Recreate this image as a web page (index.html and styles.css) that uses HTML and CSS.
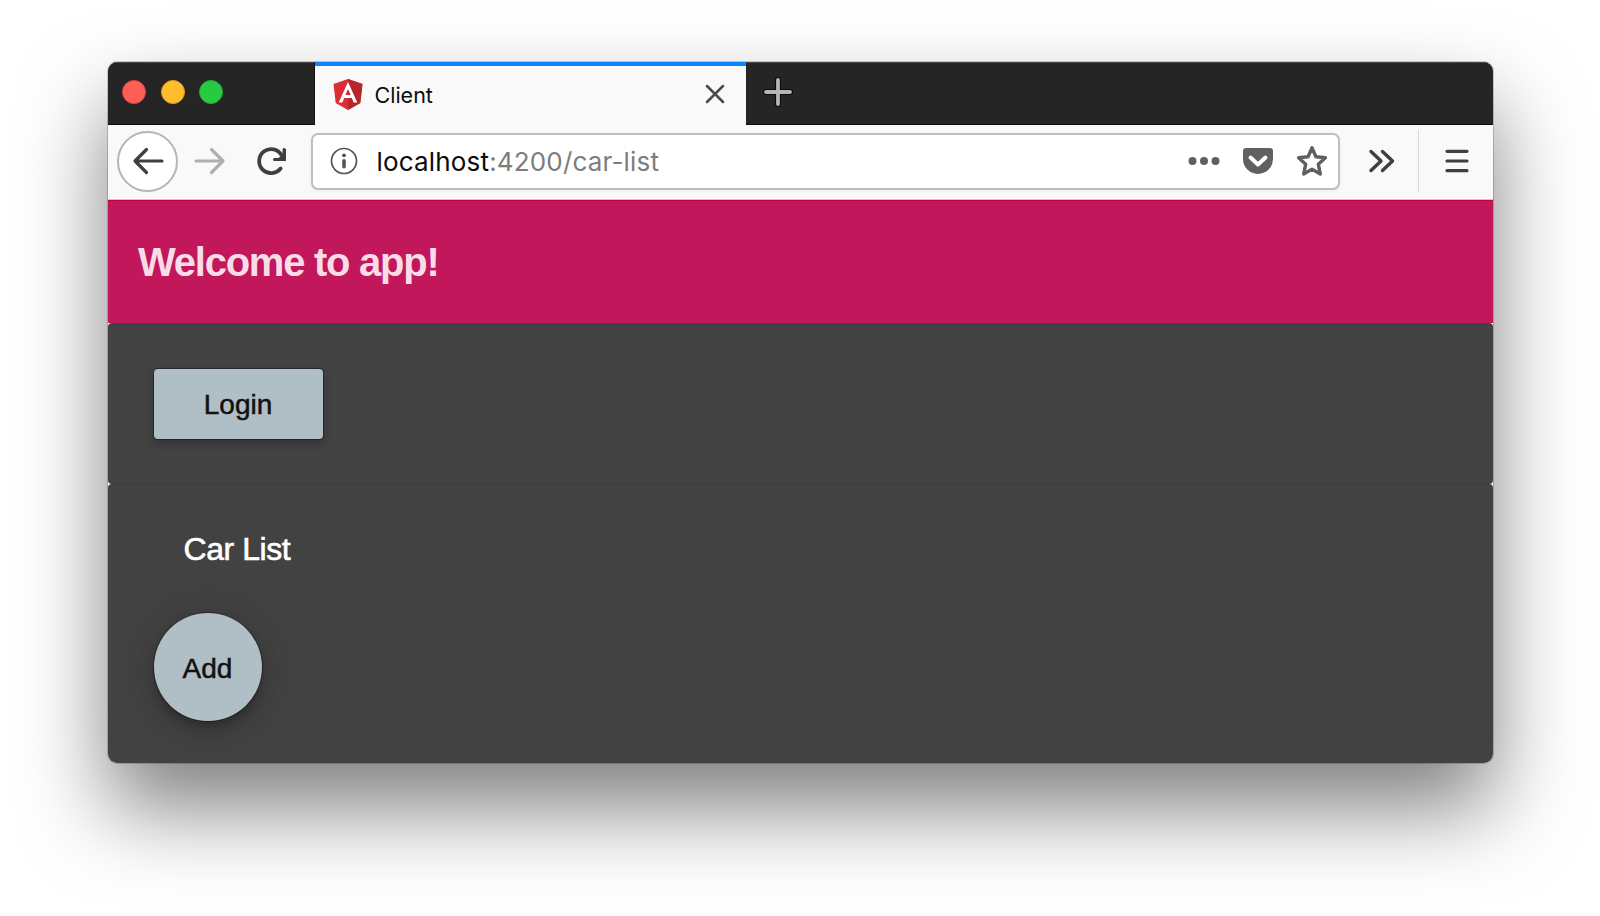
FILE: index.html
```
<!DOCTYPE html>
<html lang="en">
<head>
<meta charset="utf-8">
<title>Client</title>
<link rel="stylesheet" href="styles.css">
</head>
<body>
<div class="window">
  <header class="tabbar">
    <div class="lights"><i class="light red"></i><i class="light yellow"></i><i class="light green"></i></div>
    <div class="tab">
      <svg class="favicon" width="30" height="31" viewBox="0 0 30 31"><path fill="#dd2c35" d="M15 0 29.5 5 27.3 24 15 31 2.7 24 .5 5Z"/><path fill="#b3272d" d="M15 0 29.5 5 27.3 24 15 31Z"/><path fill="#fff" fill-rule="evenodd" d="M15 3 24.3 23.5H20.6L18.8 19H11.2L9.4 23.5H5.7ZM15 10 12.4 16H17.6Z"/></svg>
      <span class="tab-title">Client</span>
      <svg class="close" width="20" height="20" viewBox="0 0 20 20"><path d="M2 2 18 18M18 2 2 18"/></svg>
    </div>
    <svg class="plus" width="30" height="30" viewBox="0 0 30 30"><path class="plus-edge" d="M15 3V27M3 15H27"/><path class="plus-line" d="M15 3V27M3 15H27"/></svg>
  </header>
  <nav class="toolbar">
    <span class="back"><svg width="34" height="30" viewBox="0 0 34 30"><path class="line" d="M31 15H4M15.5 3.5 4 15 15.5 26.500"/></svg></span>
    <svg class="forward" width="34" height="30" viewBox="0 0 34 30"><path class="line pale" d="M3 15H30M18.500 3.500 30 15 18.500 26.500"/></svg>
    <svg class="reload" width="32" height="30" viewBox="0 0 32 30"><path class="line thick" d="M24.600 22.500A12 12 0 1 1 25.500 9"/><path fill="#3f3f41" d="M26.500 3.500Q26.500 2 28 2Q30 2 30 3.500V15H18.500Q17 15 17 13.500T18.500 12H22.500L26.500 8Z"/></svg>
    <div class="urlbar">
      <svg class="info" width="28" height="28" viewBox="0 0 28 28"><circle cx="14" cy="14" r="12.500" fill="none" stroke="#555" stroke-width="1.700"/><circle cx="14" cy="8.300" r="1.900" fill="#555"/><path d="M14 13.700V19.700" stroke="#555" stroke-width="3.600" stroke-linecap="round"/></svg>
      <span class="url"><b class="host">localhost</b>:4200/car-list</span>
      <svg class="dots" width="32" height="10" viewBox="0 0 32 10"><g fill="#606062"><circle cx="4.500" cy="5" r="4"/><circle cx="16" cy="5" r="4"/><circle cx="27.500" cy="5" r="4"/></g></svg>
      <svg class="pocket" width="32" height="28" viewBox="0 0 32 28"><path fill="#606062" d="M4 1H28Q31 1 31 4V12A15 15 0 0 1 1 12V4Q1 1 4 1Z"/><path d="M8.500 10.500 16 17.500 23.500 10.500" fill="none" stroke="#fff" stroke-width="4" stroke-linecap="round" stroke-linejoin="round"/></svg>
      <svg class="star" width="32" height="32" viewBox="0 0 32 32"><path d="M16 2.800 19.900 11.700 29.400 12.700 22.300 19.200 24.300 29 16 24.100 7.700 29 9.700 19.200 2.600 12.700 12.100 11.700Z" fill="#fff" stroke="#606062" stroke-width="3.400" stroke-linejoin="round"/></svg>
    </div>
    <svg class="more" width="28" height="26" viewBox="0 0 28 26"><path class="line chevrons" d="M3 3.500 13 13 3 22.500M14.500 3.500 24.500 13 14.500 22.500"/></svg>
    <span class="divider"></span>
    <svg class="menu" width="24" height="26" viewBox="0 0 24 26"><path class="line" d="M2 3.300H22M2 13H22M2 22.700H22"/></svg>
  </nav>
  <main class="page">
    <div class="banner"><h1 class="welcome">Welcome to app!</h1></div>
    <section class="card login-card"><button class="btn login">Login</button></section>
    <section class="card list-card">
      <h2 class="list-title">Car List</h2>
      <button class="btn add">Add</button>
    </section>
  </main>
</div>
</body>
</html>
```
FILE: styles.css
```
* { box-sizing: border-box; }
body {
  margin: 0;
  height: 916px;
  padding: 61.500px 0 0 107.500px;
  overflow: hidden;
  background: #fff;
  font-family: "Liberation Sans", Arial, sans-serif;
}
svg { display: block; flex: none; }
.window {
  width: 1385px;
  height: 701px;
  border-radius: 9px;
  overflow: hidden;
  background: #fff;
  box-shadow: 0 0 0 1px rgba(0,0,0,.18), 0 45px 86px rgba(0,0,0,.5);
}
.tabbar {
  display: flex;
  height: 63px;
  background: #252525;
  box-shadow: inset 0 1px #484848, inset 0 -1px #0c0c0c;
}
.lights { display: flex; gap: 14.500px; width: 207px; padding: 18.500px 0 0 14.500px; border-right: 1px solid #111; }
.light { width: 24px; height: 24px; border-radius: 50%; }
.red { background: #ff5f57; border: 1px solid #e0463f; }
.yellow { background: #ffbd2e; border: 1px solid #df9f20; }
.green { background: #28ca42; border: 1px solid #1eab30; }
.tab {
  display: flex;
  width: 431px;
  padding-left: 18px;
  background: #f9f9fa;
  border-top: 4px solid #0a84ff;
}
.favicon { margin-top: 13px; }
.tab-title {
  flex: 1;
  padding: 15.500px 0 0 12px;
  font: 21.500px/28px Inter, sans-serif;
  color: #0c0c0d;
}
.close { margin: 18.500px 21px 0 0; fill: none; stroke: #4a4a4b; stroke-width: 2.500; stroke-linecap: round; }
.plus { margin: 15.500px 0 0 17px; fill: none; stroke-linecap: round; }
.plus-edge { stroke: #0a0a0a; stroke-width: 6; }
.plus-line { stroke: #b5b5b5; stroke-width: 3.800; }
.toolbar {
  display: flex;
  align-items: center;
  height: 75px;
  padding: 0 24px 1px 9.500px;
  background: #f9f9fa;
  border-bottom: 1px solid #c8c8c8;
}
.back {
  display: grid;
  place-items: center;
  width: 61px;
  height: 61px;
  border: 2px solid #b5b5b5;
  border-radius: 50%;
  background: #fff;
}
.forward { margin-left: 14.500px; }
.reload { margin-left: 29.500px; }
.line { fill: none; stroke: #3f3f41; stroke-width: 3.200; stroke-linecap: round; stroke-linejoin: round; }
.pale { stroke: #b0b0b1; }
.thick { stroke-width: 3.800; }
.chevrons { stroke-width: 3.400; }
.urlbar {
  display: flex;
  align-items: center;
  width: 1029px;
  height: 57px;
  margin-left: 23px;
  padding: 0 10px 0 17px;
  border: 2px solid #bebebe;
  border-radius: 7px;
  background: #fff;
  box-shadow: 0 1px 4px rgba(0,0,0,.05);
}
.url { flex: 1; margin: 2px 0 0 18.500px; font: 26px/32px Inter, sans-serif; letter-spacing: .17px; color: #7d7d7d; }
.host { font-weight: 400; color: #0c0c0d; }
.pocket { margin-left: 22px; }
.star { margin-left: 22px; }
.more { margin-left: 28px; }
.divider { width: 1px; height: 62px; margin-left: 22px; background: #d7d7d8; }
.menu { margin-left: auto; }
.page { background: #fff; }
.banner { height: 123px; padding: 38.500px 30.500px; background: #c2185b; box-shadow: inset 0 1px #c0004b; }
.welcome { margin: 0; font-size: 40px; line-height: 48px; letter-spacing: -1.250px; color: #f8dce7; }
.card { background: #424242; border-radius: 4px; }
.login-card { height: 161px; padding: 46px; }
.list-card { height: 279px; padding: 46px; box-shadow: 0 -1px 1px rgba(0,0,0,.08); }
.btn {
  display: block;
  padding: 0;
  border: 0;
  background: #b0bec5;
  color: #111;
  font: 28px/32px "Liberation Sans", sans-serif;
  -webkit-text-stroke: .5px #111;
}
.login {
  width: 169px;
  height: 70px;
  padding-top: 2px;
  border-radius: 4px;
  box-shadow: 0 0 0 1px rgba(0,0,0,.35), 0 4px 8px rgba(0,0,0,.25);
}
.list-title {
  margin: 0;
  padding: 1px 0 0 30px;
  font-size: 32px;
  line-height: 36px;
  font-weight: 400;
  letter-spacing: -.450px;
  color: #fff;
  -webkit-text-stroke: .6px #fff;
}
.add {
  width: 108px;
  height: 108px;
  margin-top: 46.500px;
  padding-top: 3px;
  border-radius: 50%;
  box-shadow: 0 0 0 1px rgba(0,0,0,.3), 0 6px 10px -2px rgba(0,0,0,.25), 0 10px 20px rgba(0,0,0,.12), 0 2px 36px rgba(0,0,0,.12);
}
```
